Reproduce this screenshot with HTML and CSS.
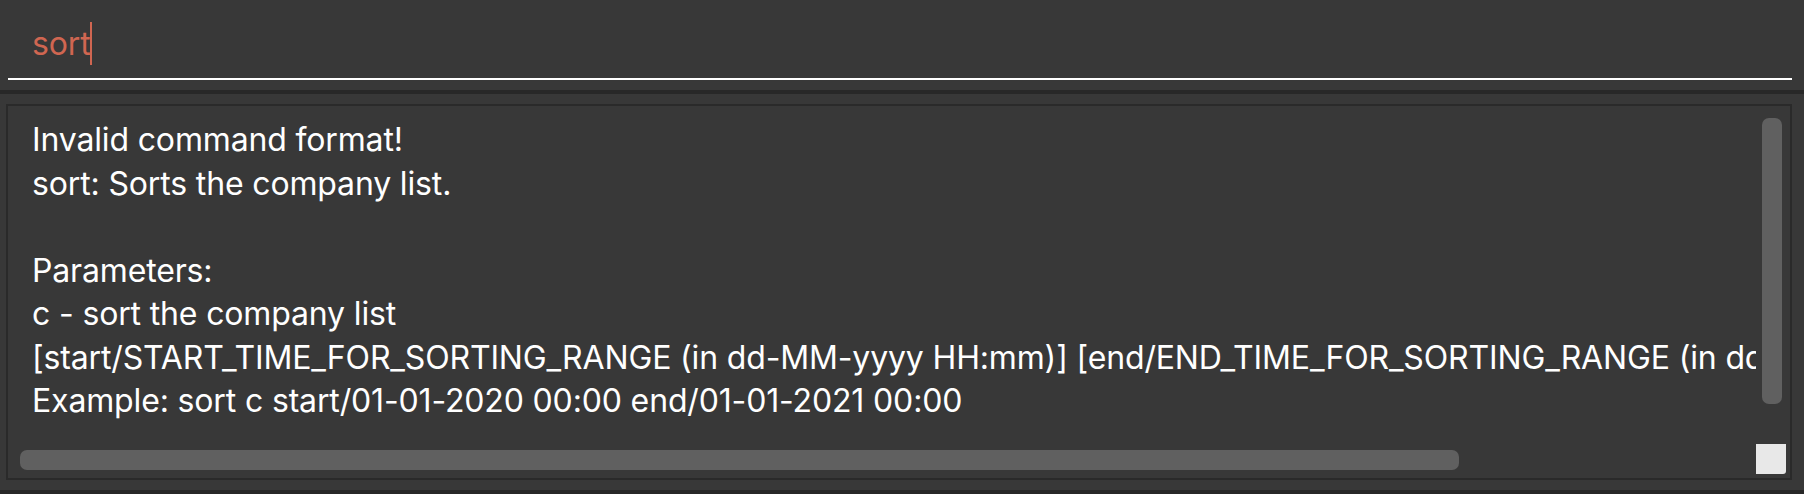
FILE: index.html
```html
<!DOCTYPE html>
<html lang="en">
<head>
<meta charset="utf-8">
<title>Command</title>
<link rel="stylesheet" href="styles.css">
</head>
<body>
<div class="app">
  <div class="command-box">
    <div class="command-field"><span class="command-text">sort</span><span class="caret"></span></div>
  </div>
  <div class="band"></div>
  <div class="result-wrap">
    <div class="result-box">
      <div class="viewport">
        <div class="result-text">Invalid command format!
sort: Sorts the company list.

Parameters:
c - sort the company list
[start/START_TIME_FOR_SORTING_RANGE (in dd-MM-yyyy HH:mm)] [end/END_TIME_FOR_SORTING_RANGE (in dd-MM-yyyy HH:mm)]
Example: sort c start/01-01-2020 00:00 end/01-01-2021 00:00</div>
      </div>
      <div class="vbar"><div class="vthumb"></div></div>
      <div class="hbar"><div class="hthumb"></div></div>
      <div class="corner"></div>
    </div>
  </div>
  <div class="band"></div>
</div>
</body>
</html>
```
FILE: styles.css
```css
* { box-sizing: border-box; }
html, body {
  margin: 0;
  padding: 0;
  background: #383838;
  width: 1804px;
  height: 494px;
  overflow: hidden;
}
.app {
  display: flex;
  flex-direction: column;
  height: 494px;
  font-family: "Inter", "Liberation Sans", sans-serif;
  color: #ffffff;
}
.command-box {
  height: 90px;
  padding: 0 12px 0 8px;
}
.command-field {
  height: 80px;
  border-bottom: 2px solid #ffffff;
  display: flex;
  align-items: flex-start;
  padding-left: 24px;
  padding-top: 22px;
}
.command-text {
  color: #d06651;
  font-size: 32px;
  line-height: 43px;
  letter-spacing: -0.15px;
}
.caret {
  display: block;
  width: 2px;
  height: 43px;
  background: #d06651;
  margin-left: -1px;
}
.band {
  height: 4px;
  background: #282828;
  flex: none;
}
.result-wrap {
  flex: 1;
  padding: 10px 12px 10px 6px;
  display: flex;
}
.result-box {
  flex: 1;
  border: 2px solid #2a2a2a;
  display: grid;
  grid-template-columns: 1fr 30px;
  grid-template-rows: 1fr 30px;
  padding: 0 4px 4px 0;
}
.viewport {
  overflow: hidden;
  padding: 12px 0 0 24px;
}
.result-text {
  white-space: pre;
  font-size: 32px;
  line-height: 43.5px;
  letter-spacing: -0.15px;
}
.vbar {
  padding: 12px 4px 40px 6px;
}
.vthumb {
  height: 100%;
  background: #606060;
  border-radius: 7px;
}
.hbar {
  padding: 6px 297px 4px 12px;
}
.hthumb {
  height: 100%;
  background: #606060;
  border-radius: 7px;
}
.corner {
  background: #e8e8e8;
  border-bottom-right-radius: 3px;
}
```
